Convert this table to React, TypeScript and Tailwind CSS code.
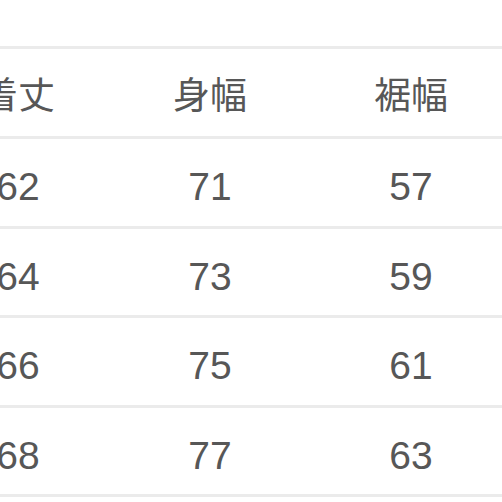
import React from "react";

const header = ["着丈", "身幅", "裾幅"];
const rows = [
  ["62", "71", "57"],
  ["64", "73", "59"],
  ["66", "75", "61"],
  ["68", "77", "63"],
];

export default function App() {
  return (
    <div
      className="w-[502px] h-[502px] overflow-hidden bg-white text-[#575757]"
      style={{ fontFamily: '"Liberation Sans", "Noto Sans CJK JP", sans-serif' }}
    >
      <div className="h-[49px] border-b-[3px] border-[#ebebeb]" />
      <div className="ml-[-74px] w-[600px]">
        <div className="grid grid-cols-[184px_200px_202px] h-[90px] pt-[8px] border-b-[3px] border-[#ebebeb] items-center">
          {header.map((h) => (
            <div key={h} className="text-center text-[37px] leading-none">
              {h}
            </div>
          ))}
        </div>
        {rows.map((r, i) => (
          <div
            key={i}
            className="grid grid-cols-[184px_200px_202px] h-[89.5px] pt-[9px] border-b-[3px] border-[#ebebeb] items-center"
          >
            {r.map((c, j) => (
              <div key={j} className="text-center text-[39px] leading-none">
                {c}
              </div>
            ))}
          </div>
        ))}
      </div>
    </div>
  );
}
